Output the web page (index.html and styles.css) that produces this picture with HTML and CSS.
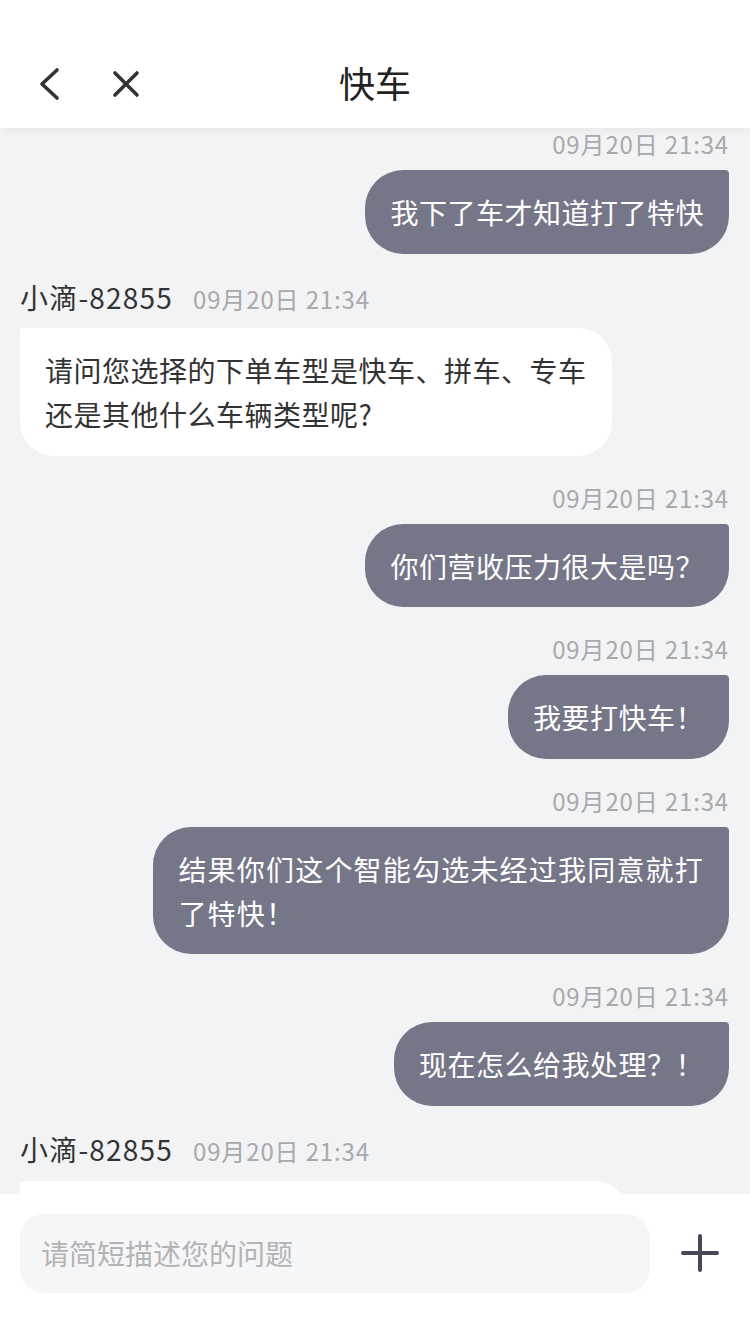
FILE: index.html
```html
<!DOCTYPE html>
<html lang="zh-CN">
<head>
<meta charset="utf-8">
<title>快车</title>
<link rel="stylesheet" href="styles.css">
</head>
<body>
<div class="page">
  <header class="header">
    <div class="header-left">
      <svg class="icon-back" width="30" height="40" viewBox="0 0 30 40"><polyline points="20,5 5,19 20,33" fill="none" stroke="#333" stroke-width="3.6" stroke-linecap="round" stroke-linejoin="round"/></svg>
      <svg class="icon-close" width="30" height="30" viewBox="0 0 30 30"><path d="M4 4 L26 26 M26 4 L4 26" fill="none" stroke="#333" stroke-width="3.6" stroke-linecap="round"/></svg>
    </div>
    <div class="title">快车</div>
    <div class="header-right"></div>
  </header>

  <main class="chat">
    <div class="msg msg-out">
      <div class="time">09月20日 21:34</div>
      <div class="bubble bubble-out">我下了车才知道打了特快</div>
    </div>

    <div class="msg msg-in">
      <div class="sender"><span class="name">小滴-82855</span><span class="time">09月20日 21:34</span></div>
      <div class="bubble bubble-in">请问您选择的下单车型是快车、拼车、专车<br>还是其他什么车辆类型呢?</div>
    </div>

    <div class="msg msg-out">
      <div class="time">09月20日 21:34</div>
      <div class="bubble bubble-out">你们营收压力很大是吗？</div>
    </div>

    <div class="msg msg-out">
      <div class="time">09月20日 21:34</div>
      <div class="bubble bubble-out">我要打快车！</div>
    </div>

    <div class="msg msg-out">
      <div class="time">09月20日 21:34</div>
      <div class="bubble bubble-out bubble-wide">结果你们这个智能勾选未经过我同意就打<br>了特快！</div>
    </div>

    <div class="msg msg-out">
      <div class="time">09月20日 21:34</div>
      <div class="bubble bubble-out">现在怎么给我处理？！</div>
    </div>

    <div class="msg msg-in">
      <div class="sender"><span class="name">小滴-82855</span><span class="time">09月20日 21:34</span></div>
      <div class="bubble bubble-in">好的,请您稍等,这边为您核实一下订单情况。</div>
    </div>
  </main>

  <footer class="footer">
    <div class="input">请简短描述您的问题</div>
    <svg class="icon-plus" width="40" height="40" viewBox="0 0 40 40"><path d="M20 3 V37 M3 20 H37" fill="none" stroke="#474858" stroke-width="4" stroke-linecap="round"/></svg>
  </footer>
</div>
</body>
</html>
```

FILE: styles.css
```css
* { box-sizing: border-box; }

html, body {
  margin: 0;
  padding: 0;
}

body {
  width: 750px;
  height: 1334px;
  overflow: hidden;
  font-family: "Noto Sans CJK SC", "Noto Sans", sans-serif;
  background: #f2f3f5;
  color: #333;
}

.page {
  display: flex;
  flex-direction: column;
  height: 1334px;
}

.header {
  position: relative;
  z-index: 2;
  flex: 0 0 128px;
  padding-top: 40px;
  background: #fff;
  box-shadow: 0 2px 8px rgba(0, 0, 0, 0.06);
  display: grid;
  grid-template-columns: 1fr auto 1fr;
  align-items: center;
}

.header-left {
  display: flex;
  align-items: center;
  gap: 44px;
  padding-left: 37px;
}

.icon-back { display: block; margin-top: 2px; }
.icon-close { display: block; }

.title {
  font-size: 36px;
  line-height: 50px;
  color: #222;
  margin-top: -4px;
}

.chat {
  flex: 1;
  overflow: hidden;
  padding: 1px 21px 0 20px;
  display: flex;
  flex-direction: column;
}

.msg {
  display: flex;
  flex-direction: column;
  margin-top: 27.1px;
  flex-shrink: 0;
}

.msg:first-child { margin-top: 0; }

.msg-out { align-items: flex-end; }
.msg-in { align-items: flex-start; }

.time {
  font-size: 24px;
  line-height: 30px;
  color: #a9a9ab;
  letter-spacing: 0.85px;
}

.msg-out .time { margin-bottom: 11px; }

.sender {
  display: flex;
  align-items: baseline;
  gap: 20px;
  line-height: 34px;
  margin-top: -1px;
  margin-bottom: 14.5px;
}

.name {
  font-size: 28px;
  color: #333;
  letter-spacing: 1.2px;
}

.bubble {
  font-size: 28px;
  line-height: 44px;
  padding: 20px 25px 19.5px;
  letter-spacing: 0.5px;
}

.bubble-out {
  background: #757688;
  color: #fff;
  border-radius: 38px 4px 38px 38px;
}

.bubble-wide {
  letter-spacing: 1.2px;
}

.bubble-in {
  background: #fff;
  color: #333;
  border-radius: 4px 34px 34px 34px;
}

.footer {
  flex: 0 0 140px;
  background: #fff;
  display: flex;
  align-items: flex-start;
  padding: 20px 0 0 20px;
  position: relative;
  z-index: 2;
}

.input {
  width: 630px;
  height: 79px;
  border-radius: 24px;
  background: #f5f6f8;
  color: #b3b3b5;
  font-size: 28px;
  line-height: 79px;
  padding-left: 21px;
}

.icon-plus {
  display: block;
  margin: 19px 0 0 30px;
}
```
